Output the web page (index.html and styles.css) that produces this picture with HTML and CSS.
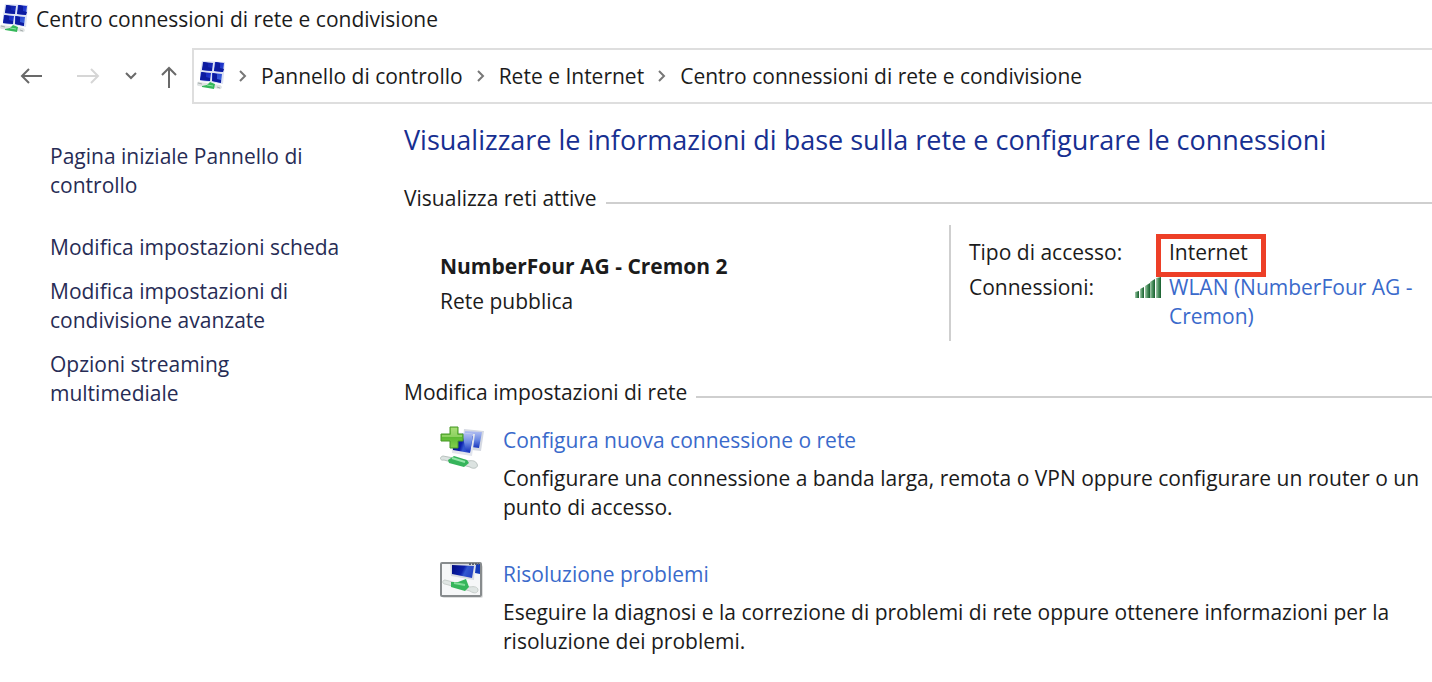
FILE: index.html
```html
<!DOCTYPE html>
<html lang="it">
<head>
  <meta charset="UTF-8" />
  <title>Centro connessioni di rete e condivisione</title>
  <link rel="stylesheet" href="styles.css">
</head>
<body>
  <!-- shared network icon -->
  <svg class="defs" width="0" height="0" aria-hidden="true">
    <defs>
      <linearGradient id="screen" x1="0" y1="0" x2="1" y2="1">
        <stop offset="0" stop-color="#0a1894" />
        <stop offset="0.5" stop-color="#1c31c8" />
        <stop offset="1" stop-color="#4c7ce8" />
      </linearGradient>
      <linearGradient id="deep" x1="0" y1="0" x2="1" y2="0.3">
        <stop offset="0" stop-color="#020c80" />
        <stop offset="0.55" stop-color="#0c20ac" />
        <stop offset="0.7" stop-color="#3358d0" />
        <stop offset="1" stop-color="#2745c4" />
      </linearGradient>
      <linearGradient id="glass" x1="0" y1="0" x2="0" y2="1">
        <stop offset="0" stop-color="#b4c0f2" />
        <stop offset="0.5" stop-color="#6d8be4" />
        <stop offset="1" stop-color="#1734bd" />
      </linearGradient>
      <linearGradient id="plus" x1="0" y1="0" x2="0" y2="1">
        <stop offset="0" stop-color="#9bd867" />
        <stop offset="0.5" stop-color="#5dba34" />
        <stop offset="1" stop-color="#83d04c" />
      </linearGradient>
      <linearGradient id="bar" x1="0" y1="0" x2="1" y2="0">
        <stop offset="0" stop-color="#a9cdb0" />
        <stop offset="0.5" stop-color="#4d9160" />
        <stop offset="1" stop-color="#155c2c" />
      </linearGradient>
    </defs>
    <symbol id="network" viewBox="0 0 28 30">
      <path d="M5 0l23 1-1 12-1 10-23-3 0-9z" fill="#dde2f3" />
      <path d="M6 1l10 1-1 8-10-1zM18 1l9 1-1 9-9-1zM4 11l10 1-1 8-10-1zM15 12l10 1-1 9-9-2z" fill="url(#screen)" />
      <path d="M7 1l4 1 0 4 4 1 0 3-10-1zM19 1l4 1 0 5 4 1-1 3-9-1zM5 11l4 1 0 4 4 1 0 3-10-1zM16 12l4 1 0 5 4 1 0 3-9-2z" fill="#0c1ba0" />
      <path d="M3 21c-4-1-4 4-1 4l5 1 10 1 5 1c3 1 4-3 1-4l-6-1z" fill="#dfe3e3" />
      <path d="M1 22l4 1m15 3l3 1" stroke="#a5adad" fill="none" />
      <path d="M5 25l5-1 3-3 5 2-1 5-12-2z" fill="#35b85a" />
      <path d="M10 24l6 1" stroke="#8ae6a0" />
    </symbol>
  </svg>

  <header class="titlebar">
    <svg class="icon-network"><use href="#network" /></svg>
    <span>Centro connessioni di rete e condivisione</span>
  </header>

  <nav class="navbar">
    <div class="nav-buttons">
      <button type="button" aria-label="Indietro">
        <svg width="24" height="20" viewBox="0 0 24 20"><path d="M22 10H2M9 3l-7 7 7 7" /></svg>
      </button>
      <button type="button" class="disabled" aria-label="Avanti">
        <svg width="24" height="20" viewBox="0 0 24 20"><path d="M1 10h21M15 3l7 7-7 7" /></svg>
      </button>
      <button type="button" class="recent" aria-label="Percorsi recenti">
        <svg width="14" height="10" viewBox="0 0 14 10"><path d="M2 2l5 5 5-5" /></svg>
      </button>
      <button type="button" class="up" aria-label="Su">
        <svg width="18" height="24" viewBox="0 0 18 24"><path d="M9 24V4M2 11l7-7 7 7" /></svg>
      </button>
    </div>
    <div class="address">
      <svg class="icon-network"><use href="#network" /></svg>
      <svg class="chevron" viewBox="0 0 10 14"><path d="M2 2l5 5-5 5" /></svg>
      <a href="#">Pannello di controllo</a>
      <svg class="chevron" viewBox="0 0 10 14"><path d="M2 2l5 5-5 5" /></svg>
      <a href="#">Rete e Internet</a>
      <svg class="chevron" viewBox="0 0 10 14"><path d="M2 2l5 5-5 5" /></svg>
      <a href="#">Centro connessioni di rete e condivisione</a>
    </div>
  </nav>

  <div class="layout">
    <aside class="sidebar">
      <a class="home" href="#">Pagina iniziale Pannello di controllo</a>
      <a href="#">Modifica impostazioni scheda</a>
      <a href="#">Modifica impostazioni di condivisione avanzate</a>
      <a href="#">Opzioni streaming multimediale</a>
    </aside>

    <main class="content">
      <h1>Visualizzare le informazioni di base sulla rete e configurare le connessioni</h1>

      <h2>Visualizza reti attive</h2>
      <section class="active-network">
        <div class="network-name">
          <strong>NumberFour AG - Cremon 2</strong>
          <span>Rete pubblica</span>
        </div>
        <dl class="details">
          <dt>Tipo di accesso:</dt>
          <dd><span class="highlight">Internet</span></dd>
          <dt>Connessioni:</dt>
          <dd>
            <svg class="signal" width="26" height="22" viewBox="0 0 26 22">
              <path d="M0 15l4-1v7H0z" fill="url(#bar)" />
              <path d="M5 12l4-2v11H5z" fill="url(#bar)" />
              <path d="M10 9l5-3v15h-5z" fill="url(#bar)" />
              <path d="M15 5l5-3v19h-5z" fill="url(#bar)" />
              <path d="M21 1l5-1v21h-5z" fill="url(#bar)" />
            </svg>
            <a href="#">WLAN (NumberFour AG - Cremon)</a>
          </dd>
        </dl>
      </section>

      <h2>Modifica impostazioni di rete</h2>
      <section class="tasks">
        <div class="task">
          <svg width="44" height="46" viewBox="0 1 44 46">
            <path d="M24 4l20 2-3 20-19-2z" fill="#d5d9e2" />
            <path d="M25 6l17 1-3 16-15-2z" fill="url(#glass)" />
            <path d="M11 7l24 2-3 22-20-3z" fill="#e2e5ec" />
            <path d="M12 9l21 2-3 17-17-3z" fill="url(#deep)" />
            <path d="M22 8l11 1-3 18-4-1z" fill="url(#glass)" />
            <path d="M3 31c-4 1-3 5 1 4l26 7c4 3 9 0 7-3-1-3-5-4-8-3z" fill="#dce3e1" stroke="#b9c2bf" />
            <path d="M8 35l6-4 13 4 2 3-5 4-15-4z" fill="#36b45b" />
            <path d="M12 33l13 4" stroke="#91e5a6" stroke-width="2" />
            <path d="M10 2h8v7h5v7h-5v7h-8v-7H1V9h9z" fill="url(#plus)" stroke="#469827" />
            <path d="M11 3h6v7h5v2H2v-2h9z" fill="#b8e68a" opacity="0.5" />
          </svg>
          <div>
            <a href="#">Configura nuova connessione o rete</a>
            <p>Configurare una connessione a banda larga, remota o VPN oppure configurare un router o un punto di accesso.</p>
          </div>
        </div>
        <div class="task">
          <svg width="44" height="46" viewBox="0 0 44 46">
            <rect x="2" y="5" width="41" height="33" rx="2" fill="#dedfdf" />
            <rect x="1" y="3" width="40" height="33" rx="1" fill="#f6f7f8" stroke="#878b8d" stroke-width="2" />
            <path d="M36 4h4v10l-5-1z" fill="#153bb8" />
            <path d="M10 4h25l-1 16-23-4z" fill="#d8dbe1" />
            <path d="M12 5l22 1-2 12-20-4z" fill="url(#deep)" />
            <path d="M5 20c-3 0-3 4 0 4l25 7c4 3 8 2 8-1s-4-4-8-3L9 21z" fill="#dfe5e3" stroke="#c8cecb" />
            <path d="M11 22l7 0 8-3 3 8-4 4-14-4z" fill="#36b65b" />
            <path d="M14 23l11 2" stroke="#82dc98" stroke-width="2" />
            <path d="M29 4h10" stroke="#5d6472" stroke-width="2" stroke-dasharray="2 1" />
          </svg>
          <div>
            <a href="#">Risoluzione problemi</a>
            <p>Eseguire la diagnosi e la correzione di problemi di rete oppure ottenere informazioni per la risoluzione dei problemi.</p>
          </div>
        </div>
      </section>
    </main>
  </div>
</body>
</html>
```
FILE: styles.css
```css
:root {
  --text: #1b1b1b;
  --link: #3a6acb;
  --heading: #172f91;
  --side: #272c55;
  --line: #cfcfcf;
}

*,
*::before,
*::after {
  margin: 0;
  padding: 0;
  box-sizing: border-box;
}

body {
  font-family: "Open Sans", "Noto Sans", sans-serif;
  font-size: 21px;
  line-height: 29px;
  background: #fff;
  color: var(--text);
}

a {
  color: var(--link);
  text-decoration: none;
}

svg {
  flex-shrink: 0;
}

.defs {
  position: absolute;
}

.icon-network {
  width: 28px;
  height: 30px;
}

.titlebar {
  display: flex;
  align-items: center;
  gap: 8px;
  height: 38px;
}

.navbar {
  display: flex;
  height: 66px;
  padding-top: 10px;
}

.nav-buttons {
  display: flex;
  align-items: center;
  width: 192px;
  padding-left: 20px;
}

.nav-buttons button {
  display: flex;
  margin-right: 32px;
  border: none;
  background: none;
}

.nav-buttons .disabled {
  margin-right: 24px;
}

.nav-buttons .recent {
  margin-right: 22px;
}

.nav-buttons .up {
  margin-right: 0;
}

.nav-buttons path {
  fill: none;
  stroke: #696969;
  stroke-width: 2;
}

.nav-buttons .disabled path {
  stroke: #d6d6d6;
}

.address {
  flex: 1;
  display: flex;
  align-items: center;
  gap: 13px;
  padding-left: 3px;
  border: 2px solid #dedede;
  border-right: none;
}

.address a {
  color: var(--text);
}

.chevron {
  width: 10px;
  height: 14px;
}

.chevron path {
  fill: none;
  stroke: #777;
  stroke-width: 2;
}

.layout {
  display: flex;
}

.sidebar {
  display: flex;
  flex-direction: column;
  gap: 15px;
  width: 404px;
  padding: 38px 60px 0 50px;
}

.sidebar a {
  color: var(--side);
}

.sidebar .home {
  margin-bottom: 18px;
}

.content {
  flex: 1;
  padding-top: 20px;
}

h1 {
  font-size: 27px;
  font-weight: 400;
  line-height: 32px;
  color: var(--heading);
}

h2 {
  display: flex;
  align-items: center;
  gap: 9px;
  margin-top: 28px;
  font-size: 21px;
  font-weight: 400;
}

h2::after {
  content: "";
  flex: 1;
  height: 2px;
  margin-top: 8px;
  background: var(--line);
}

.active-network {
  display: flex;
  margin-top: 12px;
  padding-left: 36px;
}

.network-name {
  flex: 1;
  display: flex;
  flex-direction: column;
  gap: 6px;
  padding-top: 27px;
}

.details {
  display: grid;
  grid-template-columns: 200px 1fr;
  align-content: start;
  row-gap: 6px;
  width: 483px;
  min-height: 116px;
  padding: 13px 8px 0 18px;
  border-left: 2px solid var(--line);
}

.details dd {
  position: relative;
}

/* frame and signal bars sit outside the text column */
.highlight::before {
  content: "";
  position: absolute;
  top: -4px;
  left: -13px;
  width: 110px;
  height: 43px;
  border: 5px solid #ed3f27;
}

.signal {
  position: absolute;
  top: 4px;
  left: -34px;
}

.active-network + h2 {
  margin-top: 37px;
}

.tasks {
  display: flex;
  flex-direction: column;
  gap: 38px;
  padding: 19px 8px 0 36px;
}

.task {
  display: flex;
  gap: 19px;
}

.task p {
  margin-top: 9px;
}
```
